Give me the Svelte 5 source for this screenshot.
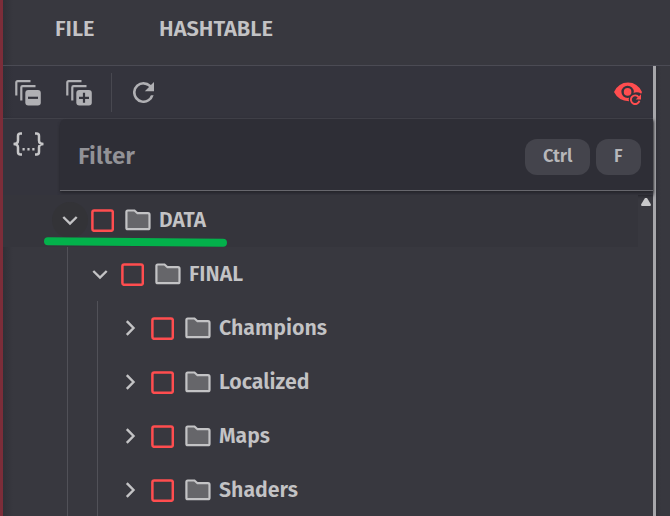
<script>
  const rows = [
    { name: 'DATA', level: 0, open: true, width: 47 },
    { name: 'FINAL', level: 1, open: true, width: 54 },
    { name: 'Champions', level: 2, open: false, width: 108 },
    { name: 'Localized', level: 2, open: false, width: 90.5 },
    { name: 'Maps', level: 2, open: false, width: 51 },
    { name: 'Shaders', level: 2, open: false, width: 79 }
  ];
</script>

{#snippet label(text, width, size)}
  <svg class="label" width={width} height="32" font-size={size}>
    <text x="0" y="23" textLength={width} lengthAdjust="spacingAndGlyphs">{text}</text>
  </svg>
{/snippet}

{#snippet stack(plus)}
  <svg class="stack" width="26" height="26" viewBox="0 0 26 26">
    <path d="M1.300 15.500V2.500Q1.300 1.200 2.600 1.200H15.500M6.300 20.500V7.500Q6.300 6.200 7.600 6.200H20.500" fill="none" stroke="currentColor" stroke-width="2.200" />
    <rect x="10.300" y="10" width="15.500" height="15.500" rx="3" fill="currentColor" />
    <path d={plus ? 'M13 17.800H23M18 12.800V22.800' : 'M13 17.800H23'} stroke="#34343d" stroke-width="2.200" />
  </svg>
{/snippet}

<div class="app">
  <header>
    <button class="file">{@render label('FILE', 39.5, 21.2)}</button>
    <button class="hash">{@render label('HASHTABLE', 114, 21.2)}</button>
  </header>
  <div class="body">
    <main>
      <div class="toolbar">
        {@render stack(false)}
        {@render stack(true)}
        <i class="divider"></i>
        <svg class="refresh" width="21" height="21" viewBox="4 4 16 16" fill="currentColor">
          <path d="M17.650 6.350A7.960 7.960 0 0 0 12 4a8 8 0 1 0 7.730 10h-2.080A6 6 0 1 1 12 6c1.660 0 3.140.690 4.220 1.780L13 11h7V4z" />
        </svg>
        <svg class="eye" width="28" height="23" viewBox="0 0 28 23">
          <path d="M0 10Q4.500.5 14 .5T28 10l-.8 1.700A8 8 0 0 0 15 19.300Q4.500 19 0 10Z" fill="#ff4d4f" />
          <circle cx="13.600" cy="9.900" r="5" fill="#ff4d4f" stroke="#34343d" stroke-width="2.400" />
          <circle cx="21.200" cy="17.500" r="6.500" fill="#34343d" />
          <path d="M24.700 15.200A4.300 4.300 0 1 0 25.400 18.700" fill="none" stroke="#ff4d4f" stroke-width="1.900" />
          <path d="M27 12.300V17.600H21.700Z" fill="#ff4d4f" />
        </svg>
      </div>
      <div class="search">
        <div class="regex">
          <svg width="31" height="24" viewBox="0 0 31 24" fill="none" stroke="currentColor" stroke-width="2.500">
            <path d="M9 1.500H7.500Q5 1.500 5 4V8.500Q5 12 0.500 12Q5 12 5 15.500V20Q5 22.500 7.500 22.500H9M22 1.500H23.500Q26 1.500 26 4V8.500Q26 12 30.500 12Q26 12 26 15.500V20Q26 22.500 23.500 22.500H22" />
            <path d="M9.500 17.200h2.200M14.400 17.200h2.200M19.300 17.200h2.200" />
          </svg>
        </div>
        <div class="field">
          {@render label('Filter', 57, 24.2)}
          <kbd class="ctrl">{@render label('Ctrl', 29.5, 17.8)}</kbd>
          <kbd class="f">{@render label('F', 8.5, 17.8)}</kbd>
        </div>
      </div>
      <div class="tree">
        {#each rows as row}
          <div class="row" class:active={row.level === 0}>
            {#each { length: row.level } as _}
              <i class="indent"></i>
            {/each}
            <span class="twist" class:hover={row.level === 0}>
              <svg width="16" height="16" viewBox="0 0 16 16" fill="none" stroke="currentColor" stroke-width="2.400">
                <path d={row.open ? 'M1.300 5L8 11.500L14.700 5' : 'M4.800 1.200L11.500 8L4.800 14.800'} />
              </svg>
            </span>
            <svg class="check" width="23" height="23" viewBox="0 0 23 23">
              <rect x="1.400" y="1.400" width="20.400" height="20.400" rx="1.800" fill="none" stroke="#ff4d4f" stroke-width="2.500" />
            </svg>
            <svg class="folder" width="26" height="22" viewBox="0 0 26 22">
              <path d="M2.700 1.500H9.500L12.500 4.200H23Q24.500 4.200 24.500 5.700V18.700Q24.500 20.200 23 20.200H2.700Q1.400 20.200 1.400 18.700V3Q1.400 1.500 2.700 1.500Z" fill="#66666a" stroke="#c3c3c5" stroke-width="2.200" />
            </svg>
            {@render label(row.name, row.width, 21.5)}
          </div>
        {/each}
        <i class="stroke"></i>
        <i class="arrow"></i>
      </div>
    </main>
    <aside></aside>
  </div>
</div>

<style>
  :global(body) { margin: 0; background: #38383f; }
  .app {
    box-sizing: border-box;
    width: 670px;
    height: 516px;
    overflow: hidden;
    border-left: 3px solid #7c2d39;
    background: linear-gradient(90deg, #303037, #38383f 10px);
    color: #c3c3c5;
    font-family: "Fira Sans", "Noto Sans", sans-serif;
    font-weight: 600;
    display: flex;
    flex-direction: column;
  }
  .label { display: block; flex: none; overflow: visible; fill: currentColor; }
  button { all: unset; }
  header { height: 65px; flex: none; display: flex; align-items: flex-start; border-bottom: 1px solid #4b4b54; }
  .file { padding: 13px 0 0 52px; }
  .hash { padding: 13px 0 0 64.500px; }
  .body { flex: 1; display: flex; min-height: 0; }
  main { width: 650px; flex: none; display: flex; flex-direction: column; }
  aside { flex: 1; border-left: 3px solid #a6a6aa; background: linear-gradient(90deg, #323239, #38383f 5px); }
  .toolbar {
    box-sizing: border-box;
    height: 53px;
    flex: none;
    display: flex;
    align-items: center;
    padding: 0 11px 0 12px;
    border-bottom: 1px solid #494951;
    background: linear-gradient(90deg, #2f2f37, #34343d 10px);
    color: #b0b0b4;
  }
  .stack { margin-right: 25px; margin-top: 1px; }
  .divider { width: 1px; height: 39px; background: #484850; margin-left: -6px; }
  .refresh { margin-left: 20.500px; }
  .eye { margin-left: auto; margin-top: 2px; }
  .search { height: 76px; flex: none; display: flex; background: #34343d; position: relative; box-shadow: 0 1px 3px #222228; }
  .regex { width: 57px; padding-top: 13px; box-sizing: border-box; padding-left: 10px; color: #c6c6c8; }
  .field {
    flex: 1;
    box-sizing: border-box;
    height: 72px;
    display: flex;
    align-items: center;
    padding-left: 18px;
    padding-right: 12px;
    border-bottom: 1px solid #67676d;
    border-radius: 6px 0 0;
    background: #2e2e36;
    box-shadow: 0 2px 3px #24242a;
    color: #929297;
  }
  .field > .label { margin-top: 4px; }
  kbd {
    box-sizing: border-box;
    height: 36px;
    border-radius: 12px;
    background: #44444c;
    color: #b7b7ba;
    font: inherit;
    display: flex;
    justify-content: center;
    margin-top: 4px;
  }
  .ctrl { width: 65px; margin-left: auto; }
  .f { width: 45px; margin-left: 6px; }
  .tree { flex: 1; position: relative; overflow: hidden; }
  .row { height: 54.100px; width: 635px; padding-left: 49px; box-sizing: border-box; display: flex; align-items: center; }
  .row.active { background: #35353c; height: 52px; padding-bottom: 2px; }
  .indent { align-self: stretch; width: 30px; flex: none; background: linear-gradient(#515158, #515158) 15px 0 / 1px 100% no-repeat; }
  .twist { width: 36px; height: 36px; border-radius: 50%; display: grid; place-items: center; }
  .hover { background: #333337; }
  .check { margin-left: 2.800px; }
  .folder { margin-left: 11.700px; }
  .row .label { margin-left: 7.500px; }
  .stroke {
    position: absolute;
    left: 41px;
    top: 42.500px;
    width: 183px;
    height: 8px;
    border-radius: 5px;
    background: #03b14b;
    transform: rotate(.45deg);
  }
  .arrow {
    position: absolute;
    left: 638px;
    top: 3px;
    width: 10px;
    height: 8px;
    background: #c8c8ca;
    clip-path: polygon(40% 0, 60% 0, 100% 80%, 95% 100%, 5% 100%, 0 80%);
  }
</style>
